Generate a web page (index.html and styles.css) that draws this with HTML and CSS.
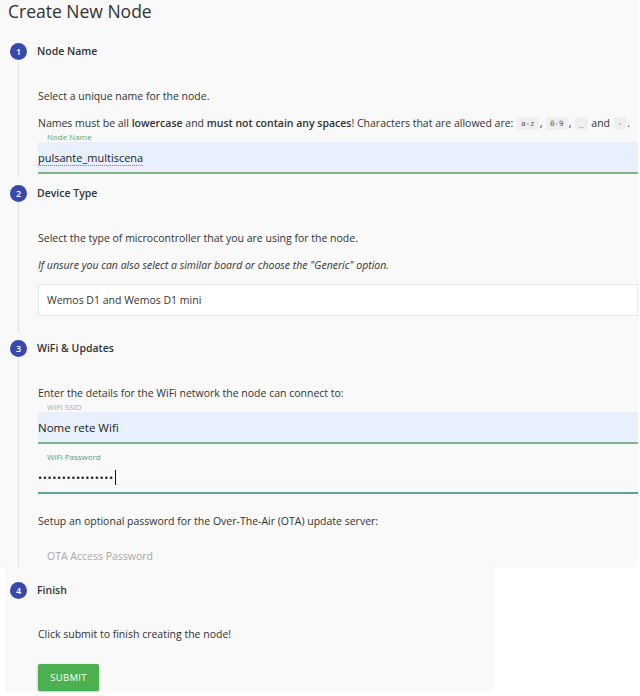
FILE: index.html
```html
<!DOCTYPE html>
<html>
<head>
<meta charset="utf-8">
<link rel="stylesheet" href="styles.css">
</head>
<body>
<div class="top">
  <h1 class="title">Create New Node</h1>

  <div class="step s1">
    <div class="step-head"><span class="num">1</span><span class="step-label">Node Name</span></div>
    <div class="step-body">
      <p class="txt">Select a unique name for the node.</p>
      <p class="txt gap">Names must be all <b>lowercase</b> and <b>must not contain any spaces</b>! Characters that are allowed are: <code>a-z</code>, <code>0-9</code>, <code>_</code> and <code>-</code>.</p>
      <div class="field">
        <div class="flabel green">Node Name</div>
        <div class="input autofill green-line"><span class="val spell">pulsante_multiscena</span></div>
      </div>
    </div>
  </div>

  <div class="step s2">
    <div class="step-head"><span class="num">2</span><span class="step-label">Device Type</span></div>
    <div class="step-body">
      <p class="txt">Select the type of microcontroller that you are using for the node.</p>
      <p class="txt gap"><i>If unsure you can also select a similar board or choose the "Generic" option.</i></p>
      <div class="select">Wemos D1 and Wemos D1 mini</div>
    </div>
  </div>

  <div class="step s3">
    <div class="step-head"><span class="num">3</span><span class="step-label">WiFi &amp; Updates</span></div>
    <div class="step-body">
      <p class="txt">Enter the details for the WiFi network the node can connect to:</p>
      <div class="field">
        <div class="flabel grey">WiFi SSID</div>
        <div class="input autofill green-line"><span class="val big">Nome rete Wifi</span></div>
      </div>
      <div class="field f2">
        <div class="flabel teal">WiFi Password</div>
        <div class="input teal-line"><span class="dots">••••••••••••••••</span><span class="caret"></span></div>
      </div>
      <p class="txt ota-txt">Setup an optional password for the Over-The-Air (OTA) update server:</p>
      <div class="input plain"><span class="ph">OTA Access Password</span></div>
    </div>
  </div>
</div>

<div class="bottom">
  <div class="step s4">
    <div class="step-head"><span class="num">4</span><span class="step-label">Finish</span></div>
    <div class="step-body last">
      <p class="txt">Click submit to finish creating the node!</p>
      <button class="submit">SUBMIT</button>
    </div>
  </div>
</div>
</body>
</html>
```

FILE: styles.css
```css
html, body {
  margin: 0;
  padding: 0;
  background: #ffffff;
  font-family: "Open Sans", "Noto Sans", sans-serif;
  color: #333;
}

.top {
  width: 638px;
  height: 567px;
  overflow: hidden;
  background: #f9f9f9;
}

.title {
  margin: 0;
  padding: 0 0 4px 8px;
  height: 22px;
  font-size: 17.5px;
  line-height: 22px;
  font-weight: 400;
  color: #333;
}

.step-head {
  display: flex;
  align-items: center;
  height: 20px;
  padding-left: 10px;
}

.num {
  width: 17px;
  height: 17px;
  border-radius: 50%;
  background: #3949ab;
  color: #fff;
  font-size: 9px;
  line-height: 17px;
  text-align: center;
  font-weight: 600;
}

.step-label {
  margin-left: 10px;
  font-size: 10.5px;
  font-weight: 600;
  color: #333;
}

.s1 { margin-top: 15px; }
.s2 { margin-top: 5px; }
.s3 { margin-top: 5px; }

.step-body {
  margin-left: 18px;
  border-left: 1px solid #e2e2e2;
  padding: 27px 0 4px 19px;
}

.s2 .step-body { padding-bottom: 17px; }
.s3 .step-body { padding-bottom: 0; }

.txt {
  margin: 0;
  font-size: 10.5px;
  line-height: 16px;
  height: 16px;
  color: #333;
  white-space: nowrap;
}

.txt.gap { margin-top: 11px; }

.txt b { font-weight: 600; }

code {
  font-family: "DejaVu Sans Mono", monospace;
  font-size: 7.5px;
  line-height: 1;
  vertical-align: 1px;
  background: #efefef;
  color: #555;
  padding: 2px 4px;
  border-radius: 2px;
  margin: 0 1px;
}

.field { display: flex; flex-direction: column; }
.f2 { margin-top: 7px; }

.flabel {
  height: 11px;
  line-height: 11px;
  font-size: 8px;
  padding-left: 9px;
}

.green { color: #66a86c; }
.grey { color: #aaa; }
.teal { color: #4e9e90; }

.input {
  height: 30px;
  display: flex;
  align-items: center;
  box-sizing: content-box;
}

.autofill { background: #e8f0fe; }
.green-line { border-bottom: 2px solid #7fb38a; }
.teal-line { border-bottom: 2px solid #5aa59b; }

.val {
  font-size: 11px;
  color: #222;
}

.val.big { font-size: 11.5px; }

.spell {
  text-decoration: underline dotted #e07070;
  text-underline-offset: 3px;
}

.dots {
  font-size: 11px;
  letter-spacing: 0.6px;
  color: #222;
}

.caret {
  width: 1px;
  height: 15px;
  background: #111;
  margin-left: 1px;
}

.select {
  margin-top: 11px;
  height: 30px;
  border: 1px solid #dcebe8;
  background: #fff;
  padding-left: 8px;
  display: flex;
  align-items: center;
  font-size: 10.5px;
  color: #333;
}

.ota-txt { margin-top: 19px; }

.input.plain { margin-top: 11px; height: 32px; }

.ph {
  padding-left: 9px;
  font-size: 10.5px;
  color: #a8a8a8;
}

.bottom {
  margin-left: 5px;
  width: 489px;
  height: 125px;
  background: #f9f9f9;
  padding-top: 13px;
  box-sizing: border-box;
}

.s4 .step-head { padding-left: 5px; }
.s4 .step-body { margin-left: 13px; border-left: none; padding: 26px 0 0 20px; }

.submit {
  display: block;
  margin-top: 22px;
  width: 61px;
  height: 27px;
  border: none;
  border-radius: 2px;
  background: #4caf50;
  color: #fff;
  font-family: "Open Sans", sans-serif;
  font-size: 9.5px;
  letter-spacing: 0.3px;
  box-shadow: 0 1px 3px rgba(0,0,0,0.25);
  padding: 0;
}
```
